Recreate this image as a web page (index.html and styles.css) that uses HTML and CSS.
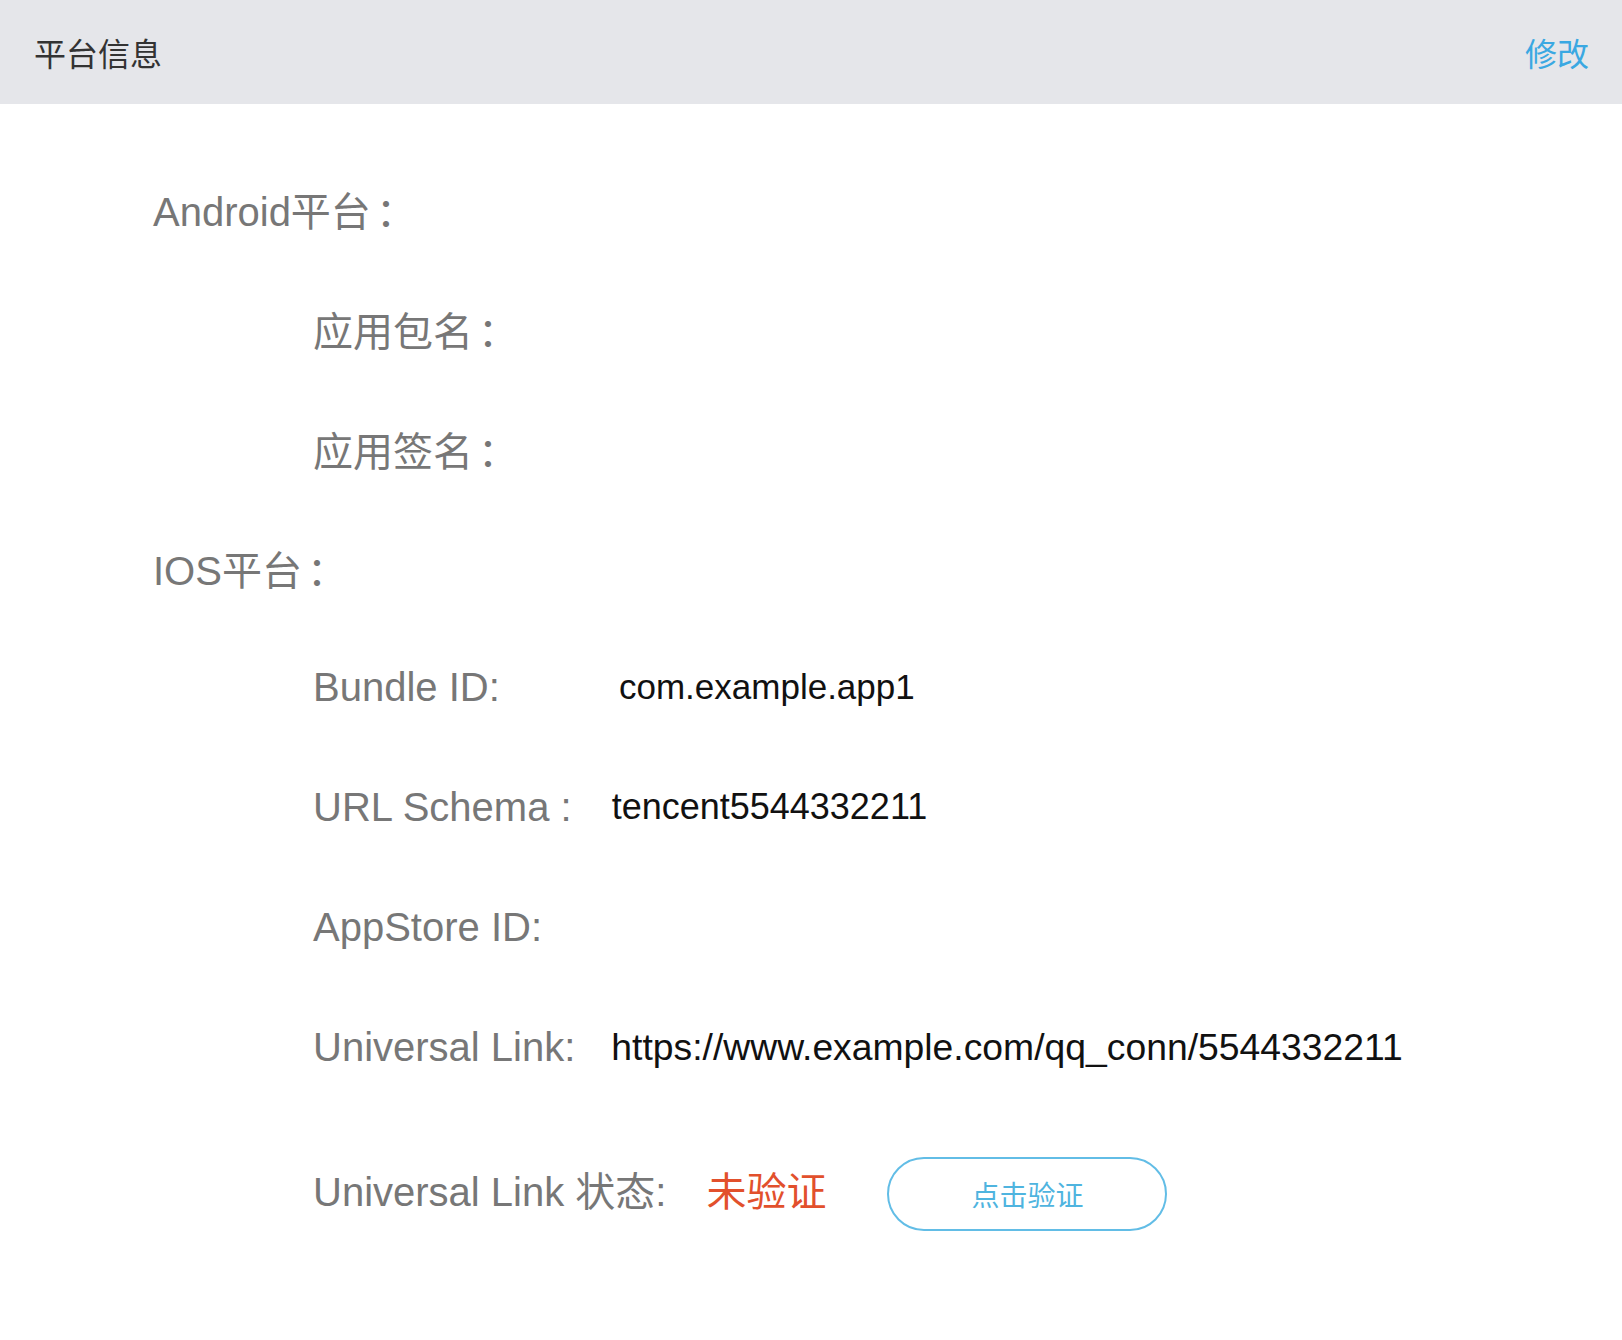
FILE: index.html
```html
<!DOCTYPE html>
<html lang="zh-CN">
<head>
<meta charset="utf-8">
<title>平台信息</title>
<link rel="stylesheet" href="styles.css">
</head>
<body>
<div class="panel">
  <header class="panel-head">
    <h2 class="panel-title">平台信息</h2>
    <a class="edit-link">修改</a>
  </header>
  <div class="panel-body">
    <div class="row level1"><span class="label">Android平台<span class="colon">：</span></span></div>
    <div class="row level2"><span class="label">应用包名<span class="colon">：</span></span></div>
    <div class="row level2"><span class="label">应用签名<span class="colon">：</span></span></div>
    <div class="row level1 ios-title"><span class="label">IOS平台<span class="colon">：</span></span></div>
    <div class="row level2"><span class="label">Bundle ID:</span><span class="value value-bundle">com.example.app1</span></div>
    <div class="row level2"><span class="label">URL Schema :</span><span class="value">tencent5544332211</span></div>
    <div class="row level2"><span class="label">AppStore ID:</span></div>
    <div class="row level2"><span class="label">Universal Link:</span><span class="value value-link">https://www.example.com/qq_conn/5544332211</span></div>
    <div class="row level2 status-row"><span class="label">Universal Link 状态:</span><span class="status">未验证</span><button class="verify-btn" type="button">点击验证</button></div>
  </div>
</div>
</body>
</html>
```

FILE: styles.css
```css
html, body {
  margin: 0;
  padding: 0;
  background: #ffffff;
}

body {
  font-family: "Liberation Sans", "Noto Sans CJK SC", sans-serif;
  text-spacing-trim: space-all;
}

.panel-head {
  height: 104px;
  background: #e5e6ea;
  display: flex;
  align-items: center;
  justify-content: space-between;
  padding: 0 33px 0 34px;
}

.panel-title {
  margin: 0;
  font-size: 32px;
  font-weight: normal;
  color: #333333;
}

.edit-link {
  font-size: 32px;
  color: #3aa8e2;
  cursor: pointer;
}

.panel-body {
  padding-top: 45px;
}

.row {
  height: 120px;
  display: flex;
  align-items: center;
  font-size: 40px;
  color: #777777;
  white-space: nowrap;
}

.row.level1 {
  padding-left: 153px;
}

.row.level2 {
  padding-left: 313px;
}

.row.ios-title {
  height: 118px;
}

.row.status-row {
  margin-top: 22px;
}

.colon {
  margin-left: 5px;
}

.label {
  min-width: 256px;
}

.value {
  margin-left: 40px;
  font-size: 36px;
  color: #111111;
}

.value-bundle {
  margin-left: 50px;
  font-size: 35px;
}

.value-link {
  margin-left: 36px;
  font-size: 37.3px;
}

.status {
  margin-left: 40px;
  font-size: 40px;
  color: #e2502c;
}

.verify-btn {
  margin-left: 61px;
  margin-top: 10px;
  width: 280px;
  height: 74px;
  border: 2px solid #62bde6;
  border-radius: 37px;
  background: #ffffff;
  font-family: inherit;
  font-size: 28px;
  color: #4fb4df;
  padding: 0;
  cursor: pointer;
}
```
